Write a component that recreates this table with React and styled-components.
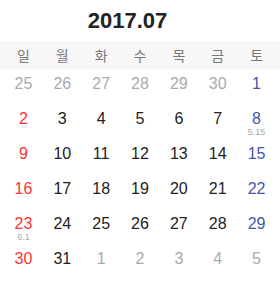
import React from 'react';
import styled, { createGlobalStyle } from 'styled-components';

const GlobalStyle = createGlobalStyle`
  body {
    margin: 0;
    background: #fff;
    font-family: "Liberation Sans", "Noto Sans CJK KR", sans-serif;
  }
`;

const WEEK = ['일', '월', '화', '수', '목', '금', '토'];

const DAYS = [
  [25, 26, 27, 28, 29, 30, 1].map((d, i) => ({ d, out: i < 6 })),
  [2, 3, 4, 5, 6, 7, 8].map((d) => ({ d })),
  [9, 10, 11, 12, 13, 14, 15].map((d) => ({ d })),
  [16, 17, 18, 19, 20, 21, 22].map((d) => ({ d })),
  [23, 24, 25, 26, 27, 28, 29].map((d) => ({ d })),
  [30, 31, 1, 2, 3, 4, 5].map((d, i) => ({ d, out: i > 1 })),
];

const LUNAR = { '1-6': '5.15', '4-0': '6.1' };

const App = () => {
  return (
    <>
      <GlobalStyle />
      <Calendar>
        <Title>2017.07</Title>
        <WeekHead>
          {WEEK.map((w) => (
            <WeekName key={w}>{w}</WeekName>
          ))}
        </WeekHead>
        <Grid>
          {DAYS.map((row, r) =>
            row.map((cell, c) => (
              <Cell key={`${r}-${c}`}>
                <Num $out={cell.out} $col={c}>
                  {cell.d}
                </Num>
                {LUNAR[`${r}-${c}`] && <Lunar>{LUNAR[`${r}-${c}`]}</Lunar>}
              </Cell>
            ))
          )}
        </Grid>
      </Calendar>
    </>
  );
};

export default App;

const Calendar = styled.div`
  width: 280px;
  height: 294px;
`;

const Title = styled.h1`
  margin: 0;
  height: 41px;
  line-height: 41px;
  padding-right: 25px;
  text-align: center;
  font-family: "Liberation Sans", Arial, sans-serif;
  font-size: 22px;
  font-weight: 700;
  color: #222;
`;

const WeekHead = styled.div`
  display: grid;
  grid-template-columns: repeat(7, 1fr);
  padding: 0 4px;
  height: 28px;
  background: #f7f7f7;
  align-items: center;
`;

const WeekName = styled.div`
  text-align: center;
  font-family: "Noto Sans CJK KR", sans-serif;
  font-size: 14px;
  color: #777;
`;

const Grid = styled.div`
  display: grid;
  grid-template-columns: repeat(7, 1fr);
  grid-auto-rows: 35px;
  padding: 0 4px;
`;

const Cell = styled.div`
  display: flex;
  flex-direction: column;
  align-items: center;
  padding-top: 7px;
`;

const Num = styled.span`
  font-size: 16px;
  line-height: 16px;
  color: ${({ $out, $col }) =>
    $out ? '#aaa' : $col === 0 ? '#f33' : $col === 6 ? '#4454ad' : '#222'};
`;

const Lunar = styled.span`
  font-size: 9px;
  line-height: 10px;
  color: #aaa;
`;
